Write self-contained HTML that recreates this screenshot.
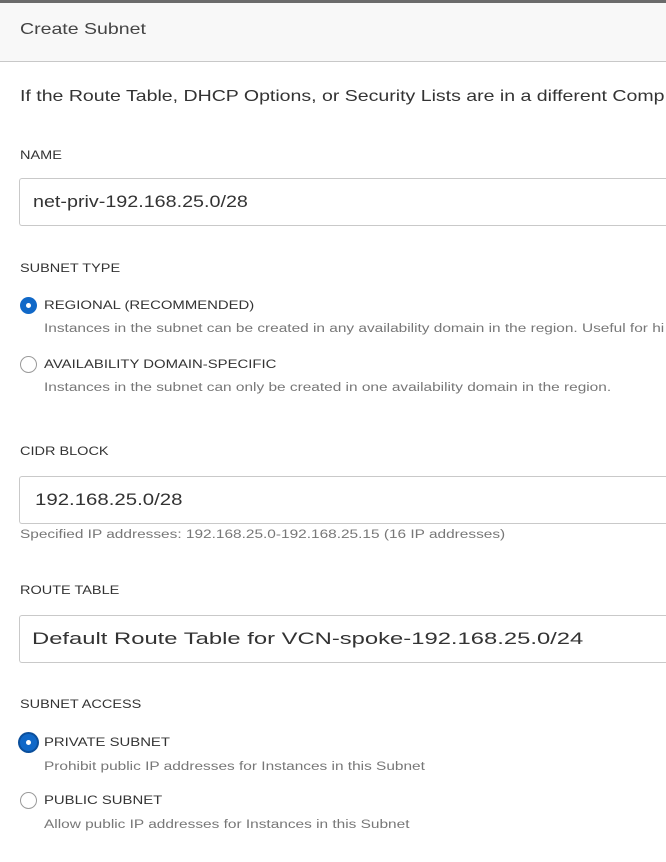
<!DOCTYPE html>
<html><head><meta charset="utf-8"><style>
*{margin:0;padding:0;box-sizing:border-box}
html,body{width:666px;height:862px;overflow:hidden}
body{background:#fff;font-family:"Liberation Sans",Arial,sans-serif;color:#333;position:relative}
#w{position:absolute;left:0;top:0;width:666px;height:862px;overflow:hidden}
.a{position:absolute;white-space:nowrap;transform-origin:0 0}
.hdr{position:absolute;left:0;top:0;width:666px;height:62px;background:#f8f8f8;border-top:3px solid #6b6b6b;border-bottom:1px solid #c8c8c8}
.lbl{font-size:11.5px;color:#333;transform:scaleX(1.26)}
.inp{position:absolute;left:19px;width:647px;height:48px;border:1px solid #c9c9c9;border-right:none;border-radius:3px 0 0 3px;overflow:hidden}
.inp span{position:absolute;left:13px;top:13px;font-size:17px;color:#333;white-space:nowrap;transform-origin:0 0}
.rl{font-size:12px;color:#333;transform:scaleX(1.24)}
.ds{font-size:11.5px;color:#777;transform:scaleX(1.34)}
.r{position:absolute;left:20px;width:17px;height:17px;border-radius:50%;border:1px solid #9a9a9a;background:#fff}
.r.on{border:none;background:#1068c8}
.r.on::after{content:"";position:absolute;left:6px;top:6px;width:5px;height:5px;border-radius:50%;background:#fff}
</style></head><body><div id="w">
<div class="hdr"></div>
<div class="a" style="left:20px;top:21px;font-size:16px;color:#444;transform:scaleX(1.22)">Create Subnet</div>
<div class="a" style="left:20px;top:88px;font-size:16px;color:#333;transform:scaleX(1.22)">If the Route Table, DHCP Options, or Security Lists are in a different Comp</div>
<div class="a lbl" style="left:20px;top:150px">NAME</div>
<div class="inp" style="top:178px"><span style="transform:scaleX(1.16)">net-priv-192.168.25.0/28</span></div>
<div class="a lbl" style="left:20px;top:263px">SUBNET TYPE</div>
<div class="r on" style="top:297px"></div>
<div class="a rl" style="left:44px;top:298px">REGIONAL (RECOMMENDED)</div>
<div class="a ds" style="left:44px;top:323px">Instances in the subnet can be created in any availability domain in the region. Useful for hi</div>
<div class="r" style="top:356px"></div>
<div class="a rl" style="left:44px;top:357px">AVAILABILITY DOMAIN-SPECIFIC</div>
<div class="a ds" style="left:44px;top:382px">Instances in the subnet can only be created in one availability domain in the region.</div>
<div class="a lbl" style="left:20px;top:446px">CIDR BLOCK</div>
<div class="inp" style="top:476px"><span style="left:15px;transform:scaleX(1.2)">192.168.25.0/28</span></div>
<div class="a ds" style="left:20px;top:529px">Specified IP addresses: 192.168.25.0-192.168.25.15 (16 IP addresses)</div>
<div class="a lbl" style="left:20px;top:585px">ROUTE TABLE</div>
<div class="inp" style="top:615px"><span style="left:12px;transform:scaleX(1.4)">Default Route Table for VCN-spoke-192.168.25.0/24</span></div>
<div class="a lbl" style="left:20px;top:699px">SUBNET ACCESS</div>
<div class="r on" style="top:734px;box-shadow:0 0 0 2px #0b4f9c"></div>
<div class="a rl" style="left:44px;top:735px">PRIVATE SUBNET</div>
<div class="a ds" style="left:44px;top:761px">Prohibit public IP addresses for Instances in this Subnet</div>
<div class="r" style="top:792px"></div>
<div class="a rl" style="left:44px;top:793px">PUBLIC SUBNET</div>
<div class="a ds" style="left:44px;top:819px">Allow public IP addresses for Instances in this Subnet</div>
</div></body></html>
